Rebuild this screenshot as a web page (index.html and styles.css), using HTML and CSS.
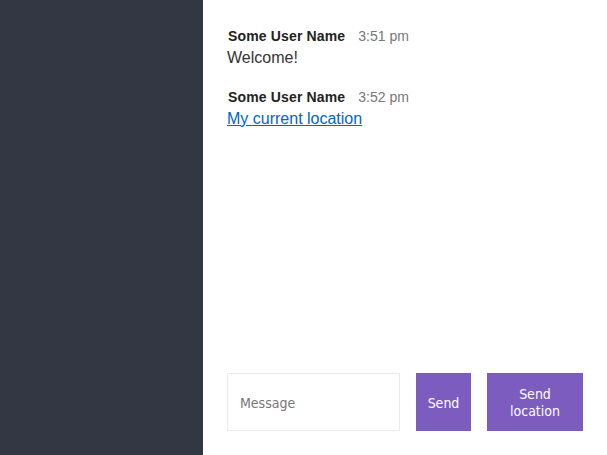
FILE: index.html
```html
<!DOCTYPE html>
<html>
<head>
<meta charset="utf-8">
<link rel="stylesheet" href="styles.css">
</head>
<body>
<div class="chat">
  <aside class="chat__sidebar"></aside>
  <main class="chat__main">
    <ol class="chat__messages">
      <li class="message">
        <div class="message__title"><span class="message__name">Some User Name</span><span class="message__time">3:51 pm</span></div>
        <div class="message__body">Welcome!</div>
      </li>
      <li class="message">
        <div class="message__title"><span class="message__name">Some User Name</span><span class="message__time">3:52 pm</span></div>
        <div class="message__body"><a href="#" class="message__link">My current location</a></div>
      </li>
    </ol>
    <div class="chat__footer">
      <form class="message-form">
        <input class="message-input" type="text" placeholder="Message">
        <button type="button" class="btn btn--send">Send</button>
      </form>
      <button type="button" class="btn btn--location">Send location</button>
    </div>
  </main>
</div>
</body>
</html>
```
FILE: styles.css
```css
* { box-sizing: border-box; }
html, body { margin: 0; padding: 0; height: 100%; }
body {
  font-family: "Liberation Sans", Arial, sans-serif;
  color: #333;
}
.chat {
  display: flex;
  height: 100%;
}
.chat__sidebar {
  width: 203px;
  flex-shrink: 0;
  background: #333744;
}
.chat__main {
  flex-grow: 1;
  display: flex;
  flex-direction: column;
  background: #fff;
}
.chat__messages {
  flex-grow: 1;
  list-style: none;
  margin: 0;
  padding: 27px 24px 0 24px;
}
.message {
  margin-bottom: 20px;
}
.message__title {
  font-size: 14px;
  line-height: 18px;
  margin-bottom: 3px;
  padding-left: 1px;
}
.message__name {
  font-weight: bold;
  color: #222;
  margin-right: 13px;
  letter-spacing: 0.15px;
}
.message__time {
  color: #777;
}
.message__body {
  font-size: 16px;
  line-height: 20px;
}
.message__link {
  color: #0066cc;
}
.chat__footer {
  display: flex;
  padding: 0 24px 24px 24px;
}
.message-form {
  display: flex;
  margin: 0;
}
.message-input {
  width: 173px;
  height: 58px;
  border: 1px solid #ebebeb;
  padding: 2px 12px 0 12px;
  font-family: "DejaVu Sans Condensed", "DejaVu Sans", sans-serif;
  font-size: 14px;
  color: #333;
  outline: none;
}
.message-input::placeholder {
  color: #777;
}
.btn {
  height: 58px;
  background: #7c5cbf;
  border: none;
  color: #fff;
  font-family: "DejaVu Sans Condensed", "DejaVu Sans", sans-serif;
  font-size: 14px;
  line-height: 17px;
  padding: 2px 10px 0 10px;
  margin: 0 0 0 16px;
}
.btn--send {
  width: 55px;
}
.btn--location {
  width: 96px;
  padding: 2px 18px 0 18px;
}
```
